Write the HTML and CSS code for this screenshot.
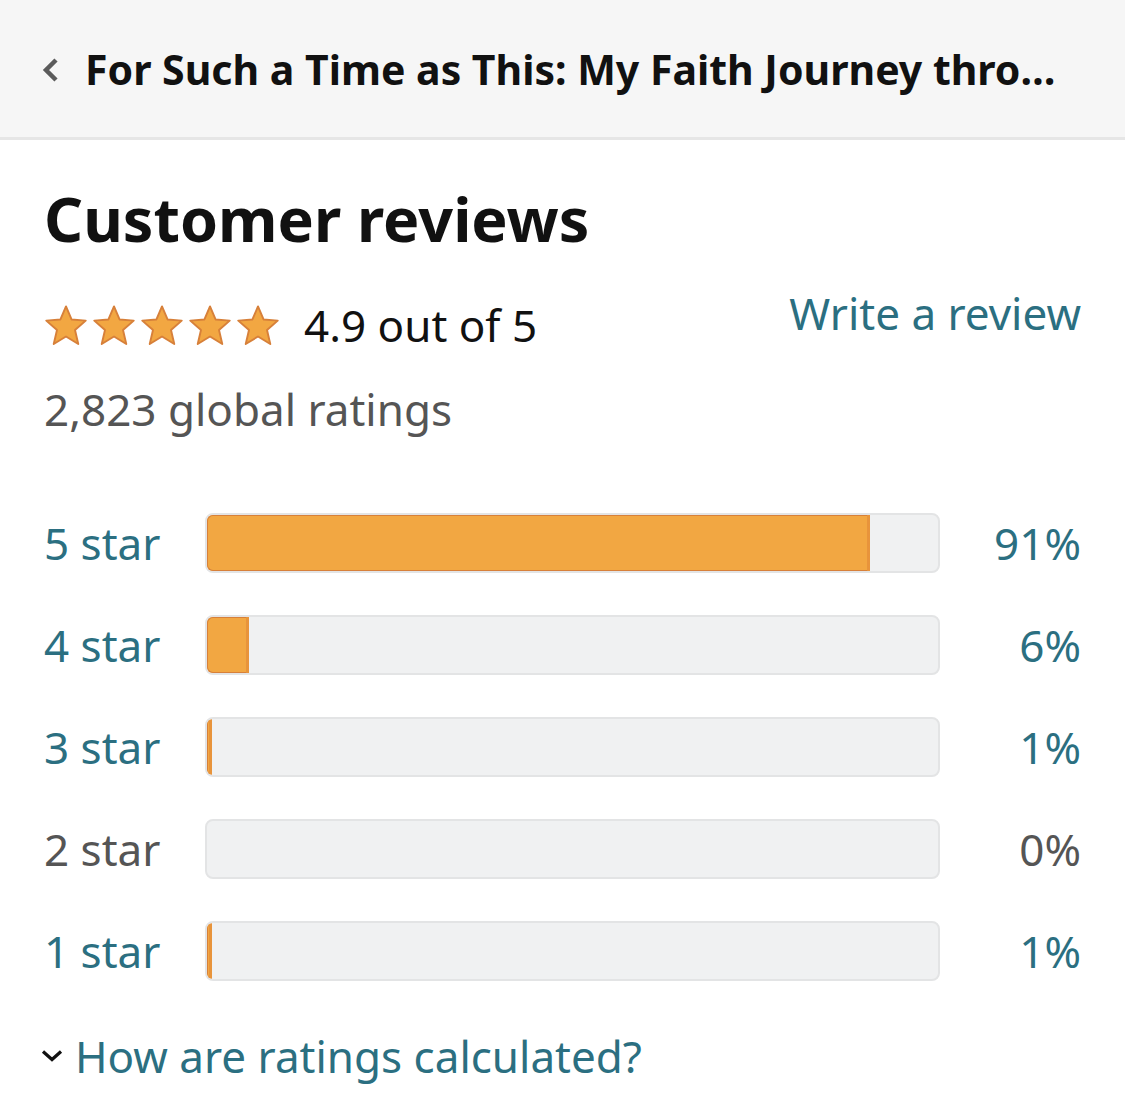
FILE: index.html
```html
<!DOCTYPE html>
<html lang="en">
<head>
    <meta charset="UTF-8">
    <meta name="viewport" content="width=device-width, initial-scale=1.0">
    <title>Customer reviews</title>
    <link rel="stylesheet" href="styles.css">
</head>
<body>
    <header class="top-bar">
        <svg class="back-icon" viewBox="0 0 18 26" width="18" height="26">
            <path d="M15 3 L5 13 L15 23" fill="none" stroke="#5b5b5b" stroke-width="4.5"/>
        </svg>
        <h1 class="book-title">For Such a Time as This: My Faith Journey through the Valley of Shadows</h1>
    </header>

    <main class="reviews">
        <h2 class="reviews-title">Customer reviews</h2>

        <div class="summary">
            <div class="rating">
                <div class="stars">
                    <svg viewBox="0 0 24 24" width="48" height="46"><path d="M12 1.8 L14.9 8.6 L22.3 9.2 L16.7 14.1 L18.4 21.4 L12 17.5 L5.6 21.4 L7.3 14.1 L1.7 9.2 L9.1 8.6 Z"/></svg>
                    <svg viewBox="0 0 24 24" width="48" height="46"><path d="M12 1.8 L14.9 8.6 L22.3 9.2 L16.7 14.1 L18.4 21.4 L12 17.5 L5.6 21.4 L7.3 14.1 L1.7 9.2 L9.1 8.6 Z"/></svg>
                    <svg viewBox="0 0 24 24" width="48" height="46"><path d="M12 1.8 L14.9 8.6 L22.3 9.2 L16.7 14.1 L18.4 21.4 L12 17.5 L5.6 21.4 L7.3 14.1 L1.7 9.2 L9.1 8.6 Z"/></svg>
                    <svg viewBox="0 0 24 24" width="48" height="46"><path d="M12 1.8 L14.9 8.6 L22.3 9.2 L16.7 14.1 L18.4 21.4 L12 17.5 L5.6 21.4 L7.3 14.1 L1.7 9.2 L9.1 8.6 Z"/></svg>
                    <svg viewBox="0 0 24 24" width="48" height="46"><path d="M12 1.8 L14.9 8.6 L22.3 9.2 L16.7 14.1 L18.4 21.4 L12 17.5 L5.6 21.4 L7.3 14.1 L1.7 9.2 L9.1 8.6 Z"/></svg>
                </div>
                <span class="score">4.9 out of 5</span>
            </div>
            <a class="write-link" href="#">Write a review</a>
        </div>

        <p class="total">2,823 global ratings</p>

        <div class="histogram">
            <a class="row" href="#">
                <span class="label">5 star</span>
                <span class="bar"><span class="fill" style="width: 91%"></span></span>
                <span class="pct">91%</span>
            </a>
            <a class="row" href="#">
                <span class="label">4 star</span>
                <span class="bar"><span class="fill" style="width: 6%"></span></span>
                <span class="pct">6%</span>
            </a>
            <a class="row" href="#">
                <span class="label">3 star</span>
                <span class="bar"><span class="fill" style="width: 1%"></span></span>
                <span class="pct">1%</span>
            </a>
            <div class="row row-empty">
                <span class="label">2 star</span>
                <span class="bar"></span>
                <span class="pct">0%</span>
            </div>
            <a class="row" href="#">
                <span class="label">1 star</span>
                <span class="bar"><span class="fill" style="width: 1%"></span></span>
                <span class="pct">1%</span>
            </a>
        </div>

        <a class="how-link" href="#">
            <svg class="down-icon" viewBox="0 0 22 14" width="22" height="14">
                <path d="M2 2.5 L11 10.5 L20 2.5" fill="none" stroke="#111" stroke-width="3.2"/>
            </svg>
            How are ratings calculated?
        </a>
    </main>
</body>
</html>
```

FILE: styles.css
```css
body {
    margin: 0;
    font-family: 'Noto Sans', 'Open Sans', sans-serif;
    background: #fff;
    color: #111;
}

a {
    text-decoration: none;
    color: #2b6f81;
}

.top-bar {
    display: flex;
    align-items: center;
    gap: 26px;
    height: 140px;
    padding: 0 44px 0 41px;
    background: #f6f6f6;
    border-bottom: 3px solid #e6e6e6;
    box-sizing: border-box;
}

.back-icon {
    flex-shrink: 0;
    margin-top: 2px;
}

.book-title {
    margin: 0;
    font-size: 41px;
    font-weight: 700;
    white-space: nowrap;
    overflow: hidden;
    text-overflow: ellipsis;
    color: #111;
}

.reviews {
    padding: 42px 44px 0 44px;
}

.reviews-title {
    margin: 0;
    font-size: 61px;
    font-weight: 700;
    line-height: 1.2;
}

.summary {
    display: flex;
    justify-content: space-between;
    align-items: flex-start;
    margin-top: 40px;
}

.rating {
    display: flex;
    align-items: center;
    gap: 22px;
}

.stars {
    display: flex;
    margin-left: -2px;
    margin-top: 2px;
}

.stars svg {
    fill: #f2a742;
    stroke: #d7803a;
    stroke-width: 1;
    stroke-linejoin: round;
}

.score {
    font-size: 44px;
    color: #111;
}

.write-link {
    font-size: 44px;
    margin-top: -12px;
}

.total {
    margin: 24px 0 0 0;
    font-size: 44px;
    color: #555;
}

.histogram {
    display: flex;
    flex-direction: column;
    gap: 42px;
    margin-top: 74px;
}

.row {
    display: flex;
    align-items: center;
    height: 60px;
}

.label {
    width: 161px;
    font-size: 44px;
}

.bar {
    flex: 1;
    height: 60px;
    box-sizing: border-box;
    background: #f0f1f2;
    border: 2px solid #e3e4e5;
    border-radius: 8px;
    overflow: hidden;
}

.fill {
    display: block;
    box-sizing: border-box;
    height: 60px;
    margin: -2px 0 0 -2px;
    background: #f2a742;
    border: 3px solid #d7803a;
    border-right-color: #e8943b;
    border-radius: 8px 0 0 8px;
}

.pct {
    width: 141px;
    text-align: right;
    font-size: 44px;
}

.row-empty {
    color: #555;
}

.how-link {
    display: flex;
    align-items: center;
    gap: 12px;
    margin-top: 45px;
    margin-left: -3px;
    font-size: 44px;
}
```
